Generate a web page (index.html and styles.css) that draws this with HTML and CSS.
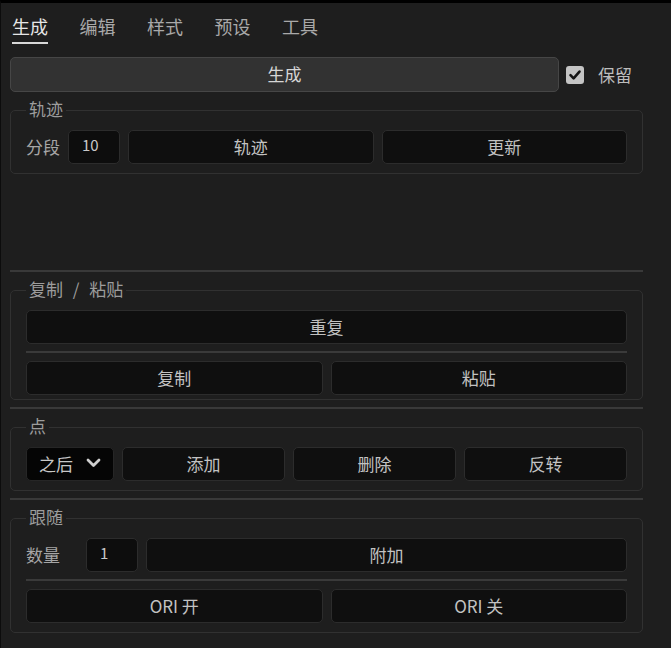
FILE: index.html
```html
<!DOCTYPE html>
<html lang="zh">
<head>
<meta charset="utf-8">
<title>面板</title>
<link rel="stylesheet" href="styles.css">
</head>
<body>
<div class="panel">
  <nav class="tabs">
    <span class="tab active">生成</span>
    <span class="tab">编辑</span>
    <span class="tab">样式</span>
    <span class="tab">预设</span>
    <span class="tab">工具</span>
  </nav>

  <div class="gen-row">
    <button class="btn btn-primary">生成</button>
    <span class="checkbox">
      <svg width="18" height="18" viewBox="0 0 18 18"><rect x="0" y="0" width="18" height="18" rx="3" fill="#c4c4c4"/><path d="M4.5 9.2 L7.6 12.3 L13.5 5.6" fill="none" stroke="#151515" stroke-width="2.6" stroke-linecap="round" stroke-linejoin="round"/></svg>
    </span>
    <span class="keep">保留</span>
  </div>

  <fieldset class="group">
    <legend>轨迹</legend>
    <div class="row">
      <span class="label">分段</span>
      <div class="field">10</div>
      <button class="btn">轨迹</button>
      <button class="btn">更新</button>
    </div>
  </fieldset>

  <div class="spacer"></div>
  <div class="sep"></div>

  <fieldset class="group tight">
    <legend class="spaced">复制 / 粘贴</legend>
    <div class="row">
      <button class="btn">重复</button>
    </div>
    <div class="sep inner"></div>
    <div class="row">
      <button class="btn">复制</button>
      <button class="btn">粘贴</button>
    </div>
  </fieldset>

  <div class="sep"></div>

  <fieldset class="group">
    <legend>点</legend>
    <div class="row">
      <div class="select">之后
        <svg class="chev" width="15" height="10" viewBox="0 0 15 10"><path d="M2 2 L7.5 7.5 L13 2" fill="none" stroke="#cfcfcf" stroke-width="2.8" stroke-linecap="round" stroke-linejoin="round"/></svg>
      </div>
      <button class="btn">添加</button>
      <button class="btn">删除</button>
      <button class="btn">反转</button>
    </div>
  </fieldset>

  <div class="sep"></div>

  <fieldset class="group">
    <legend>跟随</legend>
    <div class="row">
      <span class="label wide">数量</span>
      <div class="field">1</div>
      <button class="btn">附加</button>
    </div>
    <div class="sep inner"></div>
    <div class="row">
      <button class="btn">ORI 开</button>
      <button class="btn">ORI 关</button>
    </div>
  </fieldset>
</div>
</body>
</html>
```

FILE: styles.css
```css
* { box-sizing: border-box; }

html, body {
  margin: 0;
  padding: 0;
  background: #1e1e1e;
}

body {
  border-top: 3px solid #000;
  border-left: 1px solid #0c0c0c;
  min-height: 648px;
  font-family: "Noto Sans CJK SC", "Noto Sans", sans-serif;
  color: #c4c4c4;
}

.panel {
  width: 642px;
  padding-left: 9px;
}

.tabs {
  display: flex;
  gap: 31.5px;
  padding: 11px 0 0 2px;
}

.tab {
  font-size: 18px;
  line-height: 24px;
  color: #a9a9a9;
  padding-bottom: 4px;
  border-bottom: 2px solid transparent;
}

.tab.active {
  color: #e6e6e6;
  border-bottom-color: #d8d8d8;
}

.gen-row {
  display: flex;
  align-items: center;
  margin-top: 13px;
  height: 35px;
}

.btn {
  font-family: "Noto Sans CJK SC", "Noto Sans", sans-serif;
  font-size: 17px;
  color: #c2c2c2;
  background: #0f0f0f;
  border: 1.5px solid #2c2c2c;
  border-radius: 5px;
  height: 34px;
  flex: 1;
  padding: 0 0 2px;
  line-height: 1;
}

.btn-primary {
  height: 35px;
  background: #323232;
  border-color: #464646;
  color: #d6d6d6;
}

.checkbox {
  display: flex;
  margin-left: 7px;
}

.keep {
  margin-left: 14px;
  margin-right: 11px;
  font-size: 17px;
  color: #bdbdbd;
}

.group {
  margin: 8px 0 0 0;
  padding: 10px 15px 9px;
  border: 1px solid #313131;
  border-radius: 5px;
  min-width: 0;
}

.group.tight {
  padding-bottom: 4px;
}

.group legend {
  font-size: 17px;
  line-height: 17px;
  padding: 0 3px 3px;
  color: #9c9c9c;
  margin-left: 0;
}

.group legend.spaced {
  word-spacing: 6px;
}

.row {
  display: flex;
  gap: 8px;
  align-items: center;
  height: 34px;
}

.label {
  font-size: 17px;
  color: #a6a6a6;
  width: 34px;
  padding-bottom: 2px;
}

.label.wide {
  margin-right: 18px;
}

.field {
  width: 52px;
  height: 34px;
  background: #0d0d0d;
  border: 1.5px solid #2c2c2c;
  border-radius: 5px;
  padding: 3px 0 0 13px;
  font-size: 15px;
  line-height: 22px;
  color: #c8c8c8;
}

.select {
  width: 88px;
  height: 34px;
  background: #050505;
  border: 1.5px solid #262626;
  border-radius: 5px;
  display: flex;
  align-items: center;
  padding: 0 0 2px 12px;
  font-size: 17px;
  color: #c8c8c8;
}

.chev {
  margin-left: 13px;
}

.spacer {
  height: 96px;
}

.sep {
  height: 2px;
  background: #393939;
  margin-top: 7px;
}

.group + .spacer + .sep {
  margin-top: 0;
}

.sep.inner {
  margin: 7px 0 8px;
  background: #3a3a3a;
}
```
